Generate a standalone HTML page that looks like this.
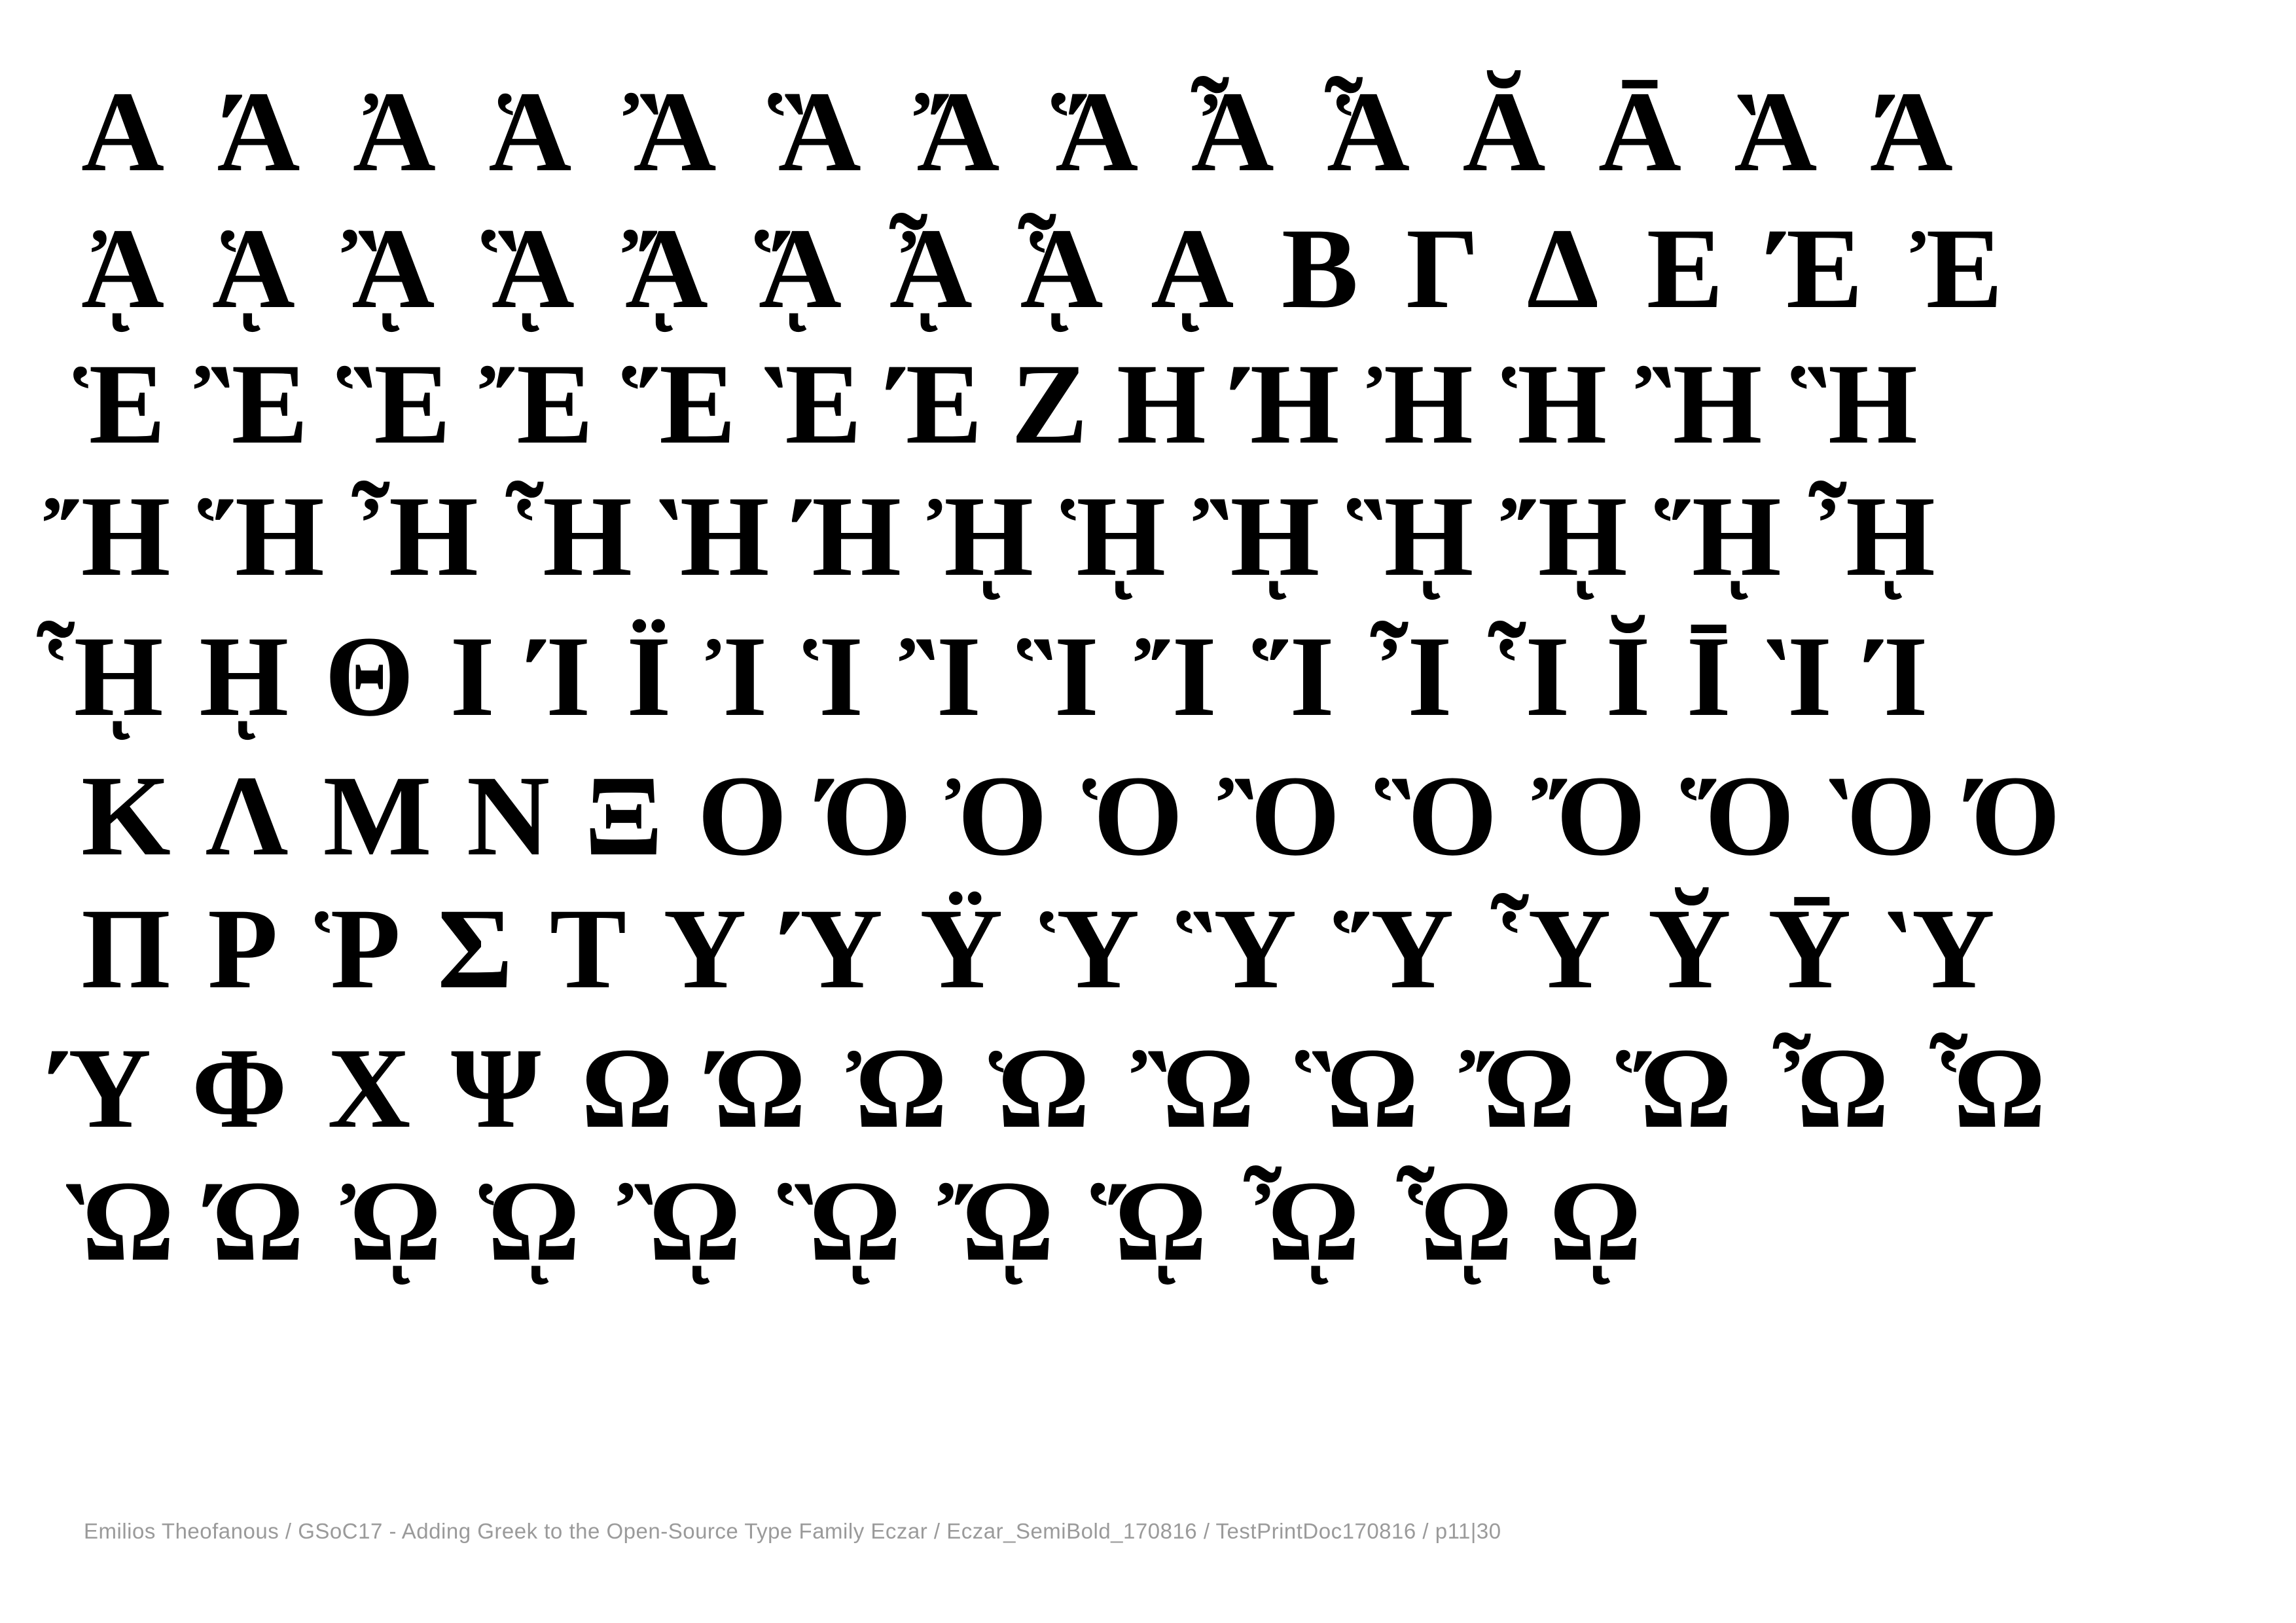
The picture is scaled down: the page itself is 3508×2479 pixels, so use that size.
<!DOCTYPE html>
<html><head><meta charset="utf-8"><style>
html,body{margin:0;padding:0;background:#fff;}
body{width:3508px;height:2479px;position:relative;overflow:hidden;}
.r{position:absolute;display:flex;justify-content:space-between;font-family:"Liberation Serif","DejaVu Serif",serif;font-weight:bold;font-size:176px;line-height:170px;height:170px;color:#000;}
.f{position:absolute;left:128px;top:2320px;font-family:"Liberation Sans","DejaVu Sans",sans-serif;font-size:33px;letter-spacing:0.5px;color:#9a9a9a;white-space:nowrap;}
</style></head><body>
<div class="r" style="left:124px;width:2860px;top:117px"><span>Α</span><span>Ά</span><span>Ἀ</span><span>Ἁ</span><span>Ἂ</span><span>Ἃ</span><span>Ἄ</span><span>Ἅ</span><span>Ἆ</span><span>Ἇ</span><span>Ᾰ</span><span>Ᾱ</span><span>Ὰ</span><span>Ά</span></div>
<div class="r" style="left:124px;width:2936px;top:326px"><span>ᾈ</span><span>ᾉ</span><span>ᾊ</span><span>ᾋ</span><span>ᾌ</span><span>ᾍ</span><span>ᾎ</span><span>ᾏ</span><span>ᾼ</span><span>Β</span><span>Γ</span><span>Δ</span><span>Ε</span><span>Έ</span><span>Ἐ</span></div>
<div class="r" style="left:112px;width:2818px;top:533px"><span>Ἑ</span><span>Ἒ</span><span>Ἓ</span><span>Ἔ</span><span>Ἕ</span><span>Ὲ</span><span>Έ</span><span>Ζ</span><span>Η</span><span>Ή</span><span>Ἠ</span><span>Ἡ</span><span>Ἢ</span><span>Ἣ</span></div>
<div class="r" style="left:67px;width:2890px;top:735px"><span>Ἤ</span><span>Ἥ</span><span>Ἦ</span><span>Ἧ</span><span>Ὴ</span><span>Ή</span><span>ᾘ</span><span>ᾙ</span><span>ᾚ</span><span>ᾛ</span><span>ᾜ</span><span>ᾝ</span><span>ᾞ</span></div>
<div class="r" style="left:56px;width:2890px;top:949px"><span>ᾟ</span><span>ῌ</span><span>Θ</span><span>Ι</span><span>Ί</span><span>Ϊ</span><span>Ἰ</span><span>Ἱ</span><span>Ἲ</span><span>Ἳ</span><span>Ἴ</span><span>Ἵ</span><span>Ἶ</span><span>Ἷ</span><span>Ῐ</span><span>Ῑ</span><span>Ὶ</span><span>Ί</span></div>
<div class="r" style="left:124px;width:3024px;top:1162px"><span>Κ</span><span>Λ</span><span>Μ</span><span>Ν</span><span>Ξ</span><span>Ο</span><span>Ό</span><span>Ὀ</span><span>Ὁ</span><span>Ὂ</span><span>Ὃ</span><span>Ὄ</span><span>Ὅ</span><span>Ὸ</span><span>Ό</span></div>
<div class="r" style="left:124px;width:2924px;top:1365px"><span>Π</span><span>Ρ</span><span>Ῥ</span><span>Σ</span><span>Τ</span><span>Υ</span><span>Ύ</span><span>Ϋ</span><span>Ὑ</span><span>Ὓ</span><span>Ὕ</span><span>Ὗ</span><span>Ῠ</span><span>Ῡ</span><span>Ὺ</span></div>
<div class="r" style="left:79px;width:3047px;top:1578px"><span>Ύ</span><span>Φ</span><span>Χ</span><span>Ψ</span><span>Ω</span><span>Ώ</span><span>Ὠ</span><span>Ὡ</span><span>Ὢ</span><span>Ὣ</span><span>Ὤ</span><span>Ὥ</span><span>Ὦ</span><span>Ὧ</span></div>
<div class="r" style="left:101px;width:2407px;top:1781px"><span>Ὼ</span><span>Ώ</span><span>ᾨ</span><span>ᾩ</span><span>ᾪ</span><span>ᾫ</span><span>ᾬ</span><span>ᾭ</span><span>ᾮ</span><span>ᾯ</span><span>ῼ</span></div>
<div class="f">Emilios Theofanous / GSoC17 - Adding Greek to the Open-Source Type Family Eczar / Eczar_SemiBold_170816 / TestPrintDoc170816 / p11|30</div>
</body></html>
